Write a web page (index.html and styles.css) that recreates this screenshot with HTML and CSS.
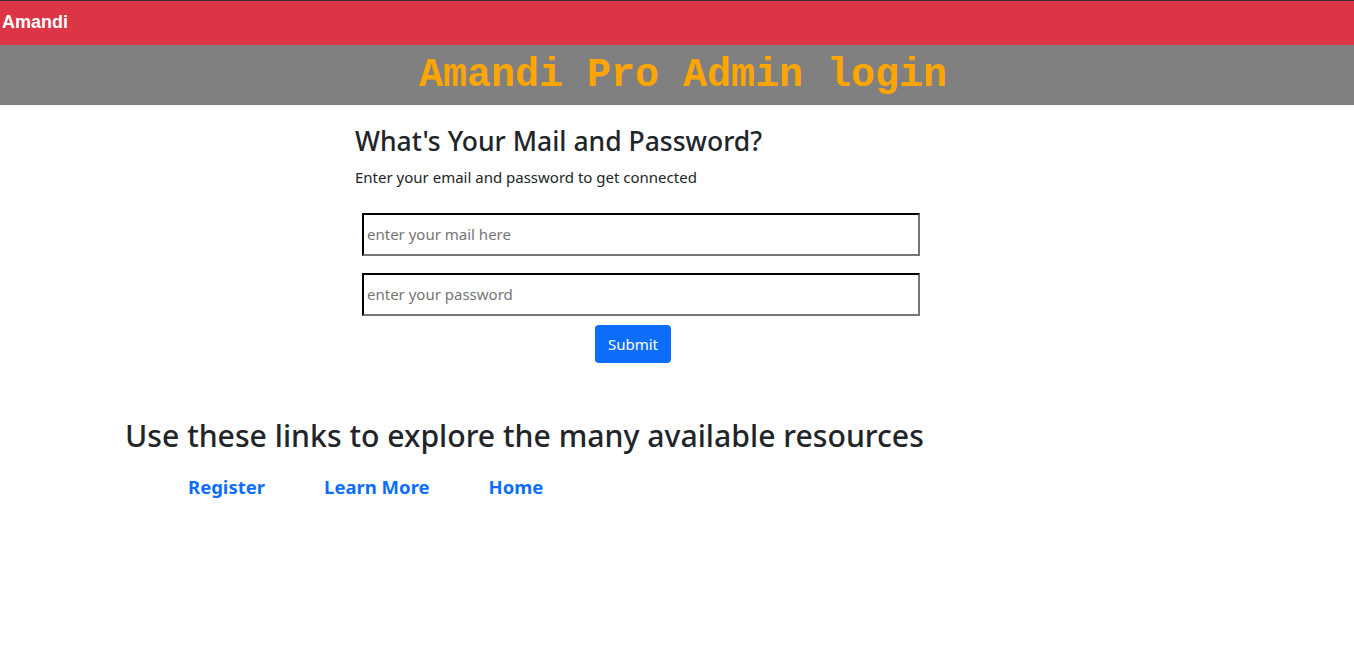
FILE: index.html
```html
<!DOCTYPE html>
<html lang="en">
<head>
<meta charset="utf-8">
<title>Amandi Pro Admin login</title>
<link rel="stylesheet" href="styles.css">
</head>
<body>
<nav class="topbar"><span class="brand">Amandi</span></nav>
<header class="banner"><h1 class="banner-title">Amandi Pro Admin login</h1></header>
<main class="main">
  <section class="login">
    <h3 class="login-title">What's Your Mail and Password?</h3>
    <p class="login-sub">Enter your email and password to get connected</p>
    <form class="login-form">
      <input class="field" type="email" placeholder="enter your mail here">
      <input class="field" type="password" placeholder="enter your password">
      <button class="submit" type="button">Submit</button>
    </form>
  </section>
  <section class="resources">
    <h2 class="resources-title">Use these links to explore the many available resources</h2>
    <div class="links">
      <a class="link" href="#">Register</a>
      <a class="link" href="#">Learn More</a>
      <a class="link" href="#">Home</a>
    </div>
  </section>
</main>
</body>
</html>
```
FILE: styles.css
```css
* { box-sizing: border-box; }
html, body { margin: 0; padding: 0; }
body {
  font-family: "Noto Sans", "Open Sans", sans-serif;
  color: #212529;
  background: #fff;
  font-size: 15px;
}
.topbar {
  border-top: 1px solid #333;
  background: #dc3545;
  height: 45px;
  display: flex;
  align-items: center;
  padding-left: 2px;
}
.brand {
  font-family: "Liberation Sans", Arial, sans-serif;
  font-weight: bold;
  font-size: 18px;
  color: #fff;
  margin-top: -2px;
}
.banner {
  background: #808080;
  height: 60px;
  display: flex;
  align-items: center;
  justify-content: center;
}
.banner-title {
  margin: 0;
  font-family: "Liberation Mono", "Courier New", monospace;
  font-weight: bold;
  font-size: 40px;
  color: #ffa500;
  padding-left: 12px;
}
.main { display: flex; flex-direction: column; }
.login {
  margin-left: 355px;
  width: 600px;
  padding-top: 21px;
}
.login-title {
  margin: 0;
  font-weight: 500;
  font-size: 26.5px;
  line-height: 1.2;
}
.login-sub {
  margin: 9px 0 0;
  font-size: 15px;
}
.login-form {
  margin-top: 26px;
  margin-left: 7px;
  width: 558px;
  display: flex;
  flex-direction: column;
  align-items: center;
}
.field {
  width: 558px;
  height: 43px;
  border: 2px inset #767676;
  border-color: #222 #767676 #767676 #222;
  padding: 0 3px;
  font-family: inherit;
  font-size: 15px;
  margin-bottom: 17px;
}
.field + .field { margin-bottom: 9px; }
.field::placeholder { color: #757575; }
.submit {
  background: #0d6efd;
  color: #fff;
  border: 0;
  border-radius: 4px;
  width: 76px;
  height: 38px;
  font-family: inherit;
  font-size: 15px;
  margin-right: 16px;
}
.resources {
  margin-left: 125px;
  padding-top: 55px;
}
.resources-title {
  margin: 0;
  font-weight: 500;
  font-size: 30.2px;
  line-height: 1.2;
}
.links {
  display: flex;
  gap: 59px;
  padding-left: 63px;
  margin-top: 20px;
}
.link {
  color: #0d6efd;
  font-weight: bold;
  font-size: 18.5px;
  text-decoration: none;
}
```
